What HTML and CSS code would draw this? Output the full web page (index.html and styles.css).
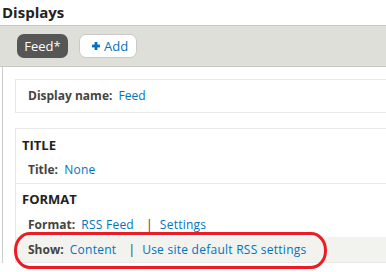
FILE: index.html
```html
<!DOCTYPE html>
<html lang="en">
  <head>
    <meta charset="UTF-8" />
    <meta name="viewport" content="width=device-width, initial-scale=1.0" />
    <title>Displays</title>
    <link rel="stylesheet" href="styles.css">
  </head>
  <body>
    <h2 class="page-title">Displays</h2>

    <div class="display-tabs">
      <span class="tab tab-active">Feed*</span>
      <a class="tab tab-add" href="#">
        <svg class="plus-icon" width="8" height="8" viewBox="0 0 8 8">
          <rect x="2.6" y="0" width="2.8" height="8" fill="#0074bd" />
          <rect x="0" y="2.6" width="8" height="2.8" fill="#0074bd" />
        </svg>
        Add
      </a>
    </div>

    <div class="display-body">
      <div class="box name-box">
        <span class="label">Display name:</span>
        <a href="#">Feed</a>
      </div>

      <div class="box">
        <div class="section">
          <h3>TITLE</h3>
          <div class="row">
            <span class="label">Title:</span>
            <a href="#">None</a>
          </div>
        </div>
        <div class="section">
          <h3>FORMAT</h3>
          <div class="row">
            <span class="label">Format:</span>
            <a href="#">RSS Feed</a>
            <span class="sep">|</span>
            <a href="#">Settings</a>
          </div>
          <div class="row row-show">
            <span class="label">Show:</span>
            <a href="#">Content</a>
            <span class="sep">|</span>
            <a href="#">Use site default RSS settings</a>
          </div>
        </div>
      </div>
    </div>

    <!-- red annotation mark -->
    <div class="highlight"></div>
  </body>
</html>
```

FILE: styles.css
```css
/* base */
* {
  margin: 0;
  padding: 0;
  box-sizing: border-box;
}

body {
  font-family: "Open Sans", "Liberation Sans", Arial, sans-serif;
  font-size: 12px;
  color: #333;
  background-color: #fff;
  overflow: hidden;
  position: relative;
}

a {
  color: #0074bd;
  text-decoration: none;
}

.page-title {
  font-size: 15px;
  font-weight: bold;
  line-height: 25px;
  padding-left: 2px;
  color: #222;
}

/* tabs bar */
.display-tabs {
  display: flex;
  gap: 11px;
  padding: 8px 17px;
  background-color: #dfdfd9;
  border-top: 1px solid #c8c8c2;
  border-bottom: 1px solid #c8c8c2;
}

.tab {
  display: flex;
  align-items: center;
  height: 24px;
  border-radius: 7px;
  font-size: 13px;
}

.tab-active {
  width: 51px;
  justify-content: center;
  background-color: #565656;
  color: #fff;
}

.tab-add {
  width: 58px;
  padding-left: 12px;
  gap: 4px;
  background-color: #fff;
  border: 1px solid #cacaca;
}

/* content */
.display-body {
  margin-left: 2px;
  border-left: 1px solid #ccc;
  padding: 12px 0 0 12px;
}

.box {
  border: 1px solid #e8e8e8;
  border-right: none;
  margin-bottom: 15px;
}

.name-box {
  padding: 7px 12px;
  line-height: 18px;
}

.label {
  font-weight: bold;
  color: #444;
  margin-right: 3px;
}

.section {
  padding-top: 7px;
}

.section + .section {
  border-top: 1px solid #e8e8e8;
  padding-top: 6px;
}

.section:first-child {
  padding-bottom: 4px;
}

h3 {
  font-size: 13px;
  line-height: 18px;
  padding-left: 6px;
  color: #222;
}

.row {
  line-height: 18px;
  padding-left: 12px;
  margin-top: 7px;
}

.row a {
  letter-spacing: 0.25px;
}

.section + .section .row {
  margin-top: 8px;
}

.section + .section .row-show {
  margin-top: 3px;
  line-height: 25px;
  background-color: #f2f2ee;
}

.sep {
  margin: 0 4px 0 9px;
  color: #333;
}

.highlight {
  position: absolute;
  left: 14px;
  top: 232px;
  width: 313px;
  height: 37px;
  border: 3.5px solid #ed1c24;
  border-radius: 16px / 18px;
}
```
